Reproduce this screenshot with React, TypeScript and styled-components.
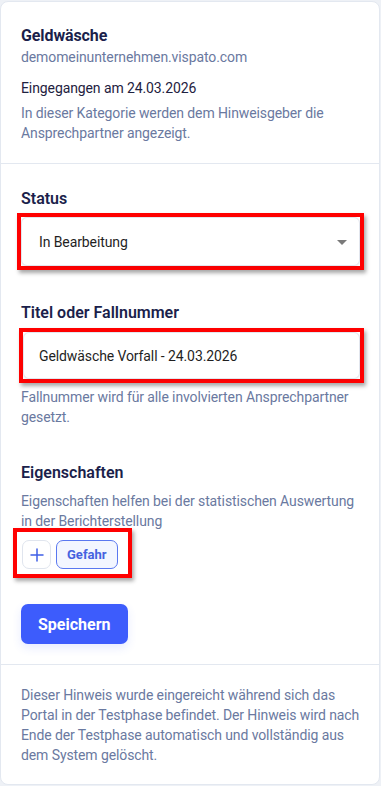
import React from "react";
import styled, { createGlobalStyle } from "styled-components";

const GlobalStyle = createGlobalStyle`
  * { box-sizing: border-box; }
  body {
    margin: 0;
    background: #eef1f6;
    font-family: Roboto, "Liberation Sans", sans-serif;
    letter-spacing: -0.1px;
  }
`;

const Card = styled.div`
  width: 380px;
  margin: 1px 0 0 0;
  background: #ffffff;
  border: 1px solid #e3e8f0;
  border-radius: 8px;
  display: flex;
  flex-direction: column;
`;

const Section = styled.section<{ $pt?: number; $pb?: number; $divider?: boolean }>`
  padding: ${(p) => p.$pt ?? 20}px 19px ${(p) => p.$pb ?? 20}px 20px;
  border-top: ${(p) => (p.$divider ? "1px solid #e3e8f0" : "none")};
  display: flex;
  flex-direction: column;
`;

const Title = styled.h1`
  margin: 0;
  font-size: 16px;
  line-height: 22px;
  font-weight: 700;
  color: #1b1f4b;
`;

const Muted = styled.p<{ $mt?: number }>`
  margin: ${(p) => p.$mt ?? 0}px 0 0 0;
  font-size: 14px;
  line-height: 20px;
  color: #6a79a0;
`;

const Dark = styled.p<{ $mt?: number }>`
  margin: ${(p) => p.$mt ?? 0}px 0 0 0;
  font-size: 14px;
  line-height: 20px;
  color: #1e2140;
`;

const Label = styled.label<{ $mt?: number }>`
  display: block;
  margin: ${(p) => p.$mt ?? 0}px 0 0 0;
  font-size: 16px;
  line-height: 22px;
  font-weight: 600;
  letter-spacing: 0;
  color: #1b1f4b;
`;

const Highlight = styled.div<{ $mt: number; $ml: number; $mr: number; $pad?: string; $fit?: boolean }>`
  margin: ${(p) => p.$mt}px ${(p) => p.$mr}px 0 ${(p) => p.$ml}px;
  border: 4px solid #ff0000;
  padding: ${(p) => p.$pad ?? "0"};
  box-shadow: 2px 3px 4px rgba(0, 0, 0, 0.35);
  align-self: ${(p) => (p.$fit ? "flex-start" : "stretch")};
`;

const Field = styled.div<{ $h: number; $pl: number }>`
  height: ${(p) => p.$h}px;
  display: flex;
  align-items: center;
  justify-content: space-between;
  padding: 0 12px 0 ${(p) => p.$pl}px;
  background: #ffffff;
  border: 1px solid #e2e6ee;
  border-radius: 6px;
  box-shadow: 0 1px 3px rgba(30, 40, 80, 0.08);
  font-size: 14px;
  color: #1f1f1f;
`;

const Caret = styled.span`
  width: 0;
  height: 0;
  border-left: 5px solid transparent;
  border-right: 5px solid transparent;
  border-top: 5px solid #7a7a7a;
  margin-top: 1px;
`;

const ChipRow = styled.div`
  display: flex;
  gap: 5px;
`;

const IconButton = styled.button`
  width: 29px;
  height: 29px;
  padding: 0;
  display: flex;
  align-items: center;
  justify-content: center;
  background: #ffffff;
  border: 1px solid #e0e5ee;
  border-radius: 7px;
  color: #3f5fe6;
`;

const Chip = styled.button`
  height: 29px;
  padding: 0 10px;
  background: #f3f6ff;
  border: 1px solid #5a78f0;
  border-radius: 7px;
  color: #4562e0;
  font-family: inherit;
  font-size: 13px;
  font-weight: 700;
  letter-spacing: 0;
`;

const PrimaryButton = styled.button`
  align-self: flex-start;
  margin-top: 26px;
  height: 40px;
  padding: 0 17px;
  background: #3d5cfc;
  color: #ffffff;
  border: none;
  border-radius: 7px;
  font-family: inherit;
  font-size: 16px;
  font-weight: 700;
  letter-spacing: 0;
  box-shadow: 0 4px 10px rgba(61, 92, 252, 0.12);
`;

export default function App() {
  return (
    <>
      <GlobalStyle />
      <Card>
        <Section $pt={23} $pb={20}>
          <Title>Geldwäsche</Title>
          <Muted>demomeinunternehmen.vispato.com</Muted>
          <Dark $mt={11}>Eingegangen am 24.03.2026</Dark>
          <Muted $mt={5}>
            In dieser Kategorie werden dem Hinweisgeber die Ansprechpartner angezeigt.
          </Muted>
        </Section>
        <Section $divider $pt={24} $pb={20}>
          <Label>Status</Label>
          <Highlight $mt={3} $ml={-4} $mr={-4}>
            <Field $h={49} $pl={17}>
              <span>In Bearbeitung</span>
              <Caret />
            </Field>
          </Highlight>
          <Label $mt={32}>Titel oder Fallnummer</Label>
          <Highlight $mt={4} $ml={-2} $mr={-4}>
            <Field $h={47} $pl={15}>
              <span>Geldwäsche Vorfall - 24.03.2026</span>
            </Field>
          </Highlight>
          <Muted $mt={4}>Fallnummer wird für alle involvierten Ansprechpartner gesetzt.</Muted>
          <Label $mt={35}>Eigenschaften</Label>
          <Muted $mt={7}>
            Eigenschaften helfen bei der statistischen Auswertung in der Berichterstellung
          </Muted>
          <Highlight $mt={-3} $ml={-8} $mr={0} $pad="8px 10px 5px 5px" $fit>
            <ChipRow>
              <IconButton aria-label="Hinzufügen">
                <svg width="14" height="14" viewBox="0 0 14 14" fill="none">
                  <path d="M7 1v12M1 7h12" stroke="currentColor" strokeWidth="1.5" strokeLinecap="round" />
                </svg>
              </IconButton>
              <Chip>Gefahr</Chip>
            </ChipRow>
          </Highlight>
          <PrimaryButton>Speichern</PrimaryButton>
        </Section>
        <Section $divider $pt={20} $pb={19}>
          <Muted>
            Dieser Hinweis wurde eingereicht während sich das Portal in der Testphase befindet. Der
            Hinweis wird nach Ende der Testphase automatisch und vollständig aus dem System gelöscht.
          </Muted>
        </Section>
      </Card>
    </>
  );
}
